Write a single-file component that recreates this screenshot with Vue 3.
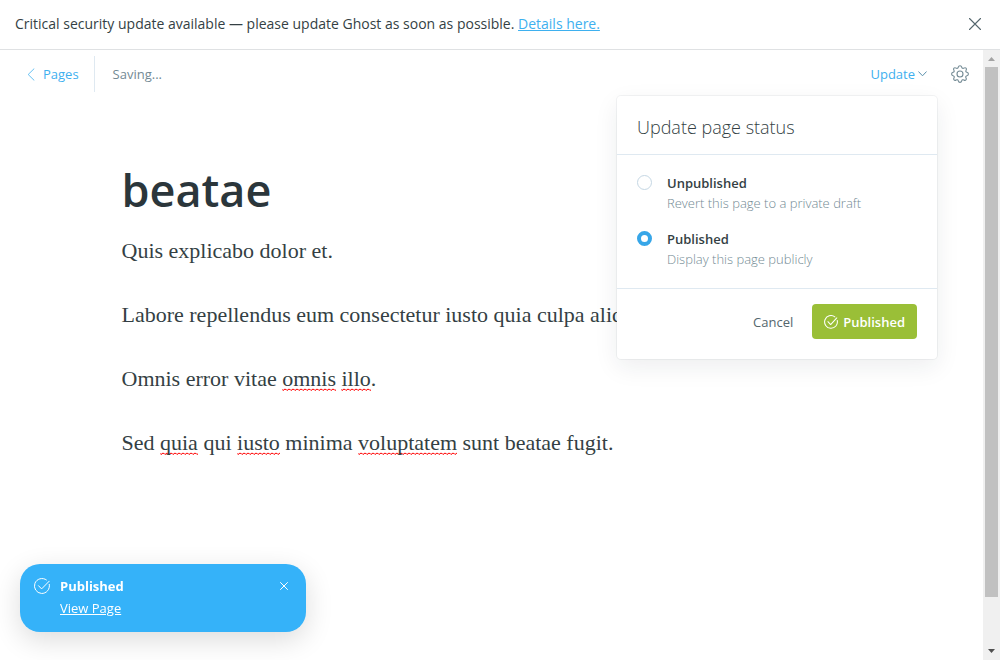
<script setup>
import { ref } from 'vue'

const title = ref('beatae')
const status = ref('published')

const options = [
  { value: 'draft', label: 'Unpublished', hint: 'Revert this page to a private draft' },
  { value: 'published', label: 'Published', hint: 'Display this page publicly' },
]

const paragraphs = [
  [{ text: 'Quis explicabo dolor et.' }],
  [{ text: 'Labore repellendus eum consectetur iusto quia culpa aliquam.' }],
  [
    { text: 'Omnis error vitae ' },
    { text: 'omnis', misspelt: true },
    { text: ' ' },
    { text: 'illo', misspelt: true },
    { text: '.' },
  ],
  [
    { text: 'Sed ' },
    { text: 'quia', misspelt: true },
    { text: ' qui ' },
    { text: 'iusto', misspelt: true },
    { text: ' minima ' },
    { text: 'voluptatem', misspelt: true },
    { text: ' sunt beatae fugit.' },
  ],
]
</script>

<template>
  <div class="app">
    <aside class="alert">
      <p class="alert-text">
        Critical security update available — please update Ghost as soon as possible.
        <a href="#details">Details here.</a>
      </p>
      <button class="icon-button" type="button" aria-label="Close alert">
        <svg width="12" height="12" viewBox="0 0 12 12" fill="none" stroke="#54666d" stroke-width="1.1" stroke-linecap="round">
          <path d="M.5.5l11 11M11.5.5l-11 11" />
        </svg>
      </button>
    </aside>

    <div class="workspace">
      <main class="editor">
        <header class="toolbar">
          <a class="back" href="#pages">
            <svg width="8" height="13" viewBox="0 0 8 13" fill="none" stroke="#3eb0ef" stroke-width=".8" stroke-linecap="round" stroke-linejoin="round">
              <path d="M7 .8L1.2 6.5L7 12.2" />
            </svg>
            Pages
          </a>
          <span class="saving">Saving...</span>

          <div class="publish">
            <button class="update" type="button" aria-expanded="true">
              Update
              <svg width="9" height="6" viewBox="0 0 9 6" fill="none" stroke="#5b91ac" stroke-width="1" stroke-linecap="round" stroke-linejoin="round">
                <path d="M.7.8L4.5 4.8L8.3.8" />
              </svg>
            </button>

            <form class="menu" @submit.prevent>
              <h2 class="menu-title">Update page status</h2>
              <div class="menu-options" role="radiogroup" aria-label="Page status">
                <label v-for="option in options" :key="option.value" class="option">
                  <input v-model="status" type="radio" name="status" :value="option.value" />
                  <span>
                    <strong>{{ option.label }}</strong>
                    <small>{{ option.hint }}</small>
                  </span>
                </label>
              </div>
              <div class="menu-actions">
                <button class="cancel" type="button">Cancel</button>
                <button class="confirm" type="submit">
                  <svg width="14" height="14" viewBox="0 0 16 16" fill="none" stroke="#fff" stroke-width="1.2" stroke-linecap="round" stroke-linejoin="round">
                    <path d="M4.5 7.7l3.1 3.2L14.6 3.4" />
                    <path d="M15.1 6.2A7.3 7.3 0 1 1 12.4 2.1" />
                  </svg>
                  Published
                </button>
              </div>
            </form>
          </div>

          <button class="icon-button" type="button" aria-label="Settings">
            <svg width="18" height="18" viewBox="0 0 18 18" fill="none" stroke="#738a94" stroke-width="1.1" stroke-linejoin="round">
              <path d="M7.3 2.2C7.7.2 10.3.2 10.7 2.2C10.9 3.3 12 3.7 12.9 3.1C14.6 2 16.2 3.6 15.1 5.2C14.5 6.1 14.8 7.1 15.9 7.3C17.9 7.7 17.9 10.3 15.9 10.7C14.8 10.9 14.4 12 15 12.9C16.1 14.5 14.5 16.1 12.9 15C12 14.4 10.9 14.8 10.7 15.9C10.3 17.9 7.7 17.9 7.3 15.9C7.1 14.8 6 14.4 5.1 15C3.5 16.1 1.9 14.5 3 12.9C3.6 12 3.2 10.9 2.1 10.7C.1 10.3.1 7.7 2.1 7.3C3.2 7.1 3.5 6.1 2.9 5.2C1.8 3.6 3.4 2 5.1 3.1C6 3.7 7.1 3.3 7.3 2.2Z" />
              <circle cx="9" cy="9" r="3" />
            </svg>
          </button>
        </header>

        <article class="page">
          <input v-model="title" class="page-title" type="text" aria-label="Page title" />
          <div class="page-body" contenteditable="true" spellcheck="false" role="textbox" aria-label="Page content">
            <p v-for="(parts, i) in paragraphs" :key="i"><span v-for="(part, j) in parts" :key="j" :class="{ misspelt: part.misspelt }">{{ part.text }}</span></p>
          </div>
        </article>
      </main>

      <div class="scrollbar" aria-hidden="true">
        <svg width="7" height="4" viewBox="0 0 7 4"><path d="M3.5 0L7 4H0z" fill="#a3a3a3" /></svg>
        <div class="thumb"></div>
        <svg width="7" height="4" viewBox="0 0 7 4"><path d="M3.5 4L7 0H0z" fill="#505050" /></svg>
      </div>
    </div>

    <aside class="toast" role="status">
      <svg width="16" height="16" viewBox="0 0 16 16" fill="none" stroke="#fff" stroke-width="1" stroke-linecap="round" stroke-linejoin="round">
        <path d="M4.5 7.7l3.1 3.2L15.2 3.2" />
        <path d="M15.3 6.4A7.5 7.5 0 1 1 12.4 1.9" />
      </svg>
      <div class="toast-content">
        <strong>Published</strong>
        <a href="#view">View Page</a>
      </div>
      <button class="icon-button" type="button" aria-label="Close notification">
        <svg width="8" height="8" viewBox="0 0 8 8" fill="none" stroke="#fff" stroke-width="1" stroke-linecap="round">
          <path d="M.5.5l7 7M7.5.5l-7 7" />
        </svg>
      </button>
    </aside>
  </div>
</template>

<style>
body {
  margin: 0;
  background: #fff;
}
</style>

<style scoped>
.app,
.app * {
  box-sizing: border-box;
}

.app {
  display: flex;
  flex-direction: column;
  min-height: 100vh;
  font-family: "Open Sans", "Noto Sans", sans-serif;
  font-size: 13px;
  line-height: 20px;
  color: #343f44;
}

button,
input {
  font: inherit;
  color: inherit;
}

button {
  padding: 0;
  border: 0;
  background: none;
  cursor: pointer;
}

svg {
  display: block;
  flex: none;
}

.icon-button {
  display: flex;
  flex: none;
}

.alert {
  display: flex;
  align-items: center;
  justify-content: space-between;
  padding: 14px 19px 15px 15px;
  border-bottom: 1px solid #dfe1e3;
}

.alert-text {
  margin: 0;
  font-size: 14px;
}

.alert a {
  color: #3eb0ef;
}

.workspace {
  display: flex;
  flex: 1;
}

.editor {
  flex: 1;
  min-width: 0;
}

.toolbar {
  display: flex;
  align-items: center;
  padding: 6px 14px 0 27px;
}

.back {
  display: flex;
  align-items: center;
  gap: 8px;
  height: 36px;
  padding-right: 15px;
  border-right: 1px solid #dfe9f1;
  color: #3eb0ef;
  text-decoration: none;
}

.saving {
  padding-left: 18px;
  color: #738a94;
}

.publish {
  position: relative;
  margin-left: auto;
  margin-right: 24px;
}

.update {
  display: flex;
  align-items: center;
  gap: 3px;
  color: #3eb0ef;
}

.menu {
  position: absolute;
  z-index: 1;
  top: 32px;
  right: -10px;
  width: 320px;
  border-radius: 4px;
  background: #fff;
  box-shadow: 0 0 0 1px rgba(99, 114, 130, 0.08), 0 8px 24px rgba(27, 39, 51, 0.08);
}

.menu-title {
  margin: 0;
  padding: 19px 20px 15px;
  border-bottom: 1px solid #dfe9f1;
  font-size: 18px;
  line-height: 24px;
  font-weight: 300;
}

.menu-options {
  display: flex;
  flex-direction: column;
  gap: 16px;
  padding: 18px 20px 19px;
  border-bottom: 1px solid #dfe9f1;
}

.option {
  display: flex;
  gap: 15px;
}

.option input {
  appearance: none;
  width: 15px;
  height: 15px;
  margin: 2px 0 0;
  border: 1px solid #c5d7e4;
  border-radius: 50%;
  background: #fff;
}

.option input:checked {
  border: 4px solid #37a6e8;
}

.option strong,
.option small {
  display: block;
  font-size: 13px;
}

.option strong {
  font-weight: 600;
}

.option small {
  color: #738a94;
  font-weight: 300;
}

.menu-actions {
  display: flex;
  justify-content: flex-end;
  gap: 19px;
  padding: 15px 20px 20px;
}

.cancel {
  color: #54666d;
}

.confirm {
  display: flex;
  align-items: center;
  gap: 5px;
  height: 35px;
  padding: 0 12px;
  border-radius: 4px;
  background: #9abf37;
  color: #fff;
  font-weight: 600;
}

.page {
  max-width: 740px;
  margin: 0 auto;
  padding-top: 66px;
}

.page-title {
  display: block;
  width: 100%;
  padding: 0;
  border: 0;
  outline: 0;
  background: none;
  color: #2b363b;
  font-size: 45px;
  line-height: 64px;
  font-weight: 600;
}

.page-body {
  display: flex;
  flex-direction: column;
  gap: 32px;
  margin-top: 13px;
  outline: 0;
  font-family: "Liberation Serif", serif;
  font-size: 22px;
  line-height: 32px;
}

.page-body p {
  margin: 0;
}

.misspelt {
  background: url("data:image/svg+xml,%3Csvg xmlns='http://www.w3.org/2000/svg' width='4' height='3'%3E%3Cpath d='M-1 0L1 2L3 .5L5 2' transform='translate(0 .5)' fill='none' stroke='red'/%3E%3C/svg%3E") left bottom repeat-x;
}

.scrollbar {
  display: flex;
  flex-direction: column;
  align-items: center;
  width: 17px;
  padding: 7px 0;
  background: #f0f0f0;
}

.thumb {
  flex: none;
  width: 13px;
  height: 89%;
  margin: 6px 0 auto;
  background: #c1c1c1;
}

.toast {
  position: fixed;
  bottom: 28px;
  left: 20px;
  display: flex;
  gap: 10px;
  width: 286px;
  padding: 12px 18px 13px 14px;
  border-radius: 20px;
  background: #35b2f9;
  box-shadow: 0 8px 28px rgba(0, 0, 0, 0.14);
  color: #fff;
}

.toast > svg {
  margin-top: 2px;
}

.toast .icon-button {
  margin-top: 6px;
}

.toast-content {
  display: flex;
  flex: 1;
  flex-direction: column;
  align-items: flex-start;
  gap: 1px;
  line-height: 21px;
}

.toast a {
  color: #fff;
}
</style>
